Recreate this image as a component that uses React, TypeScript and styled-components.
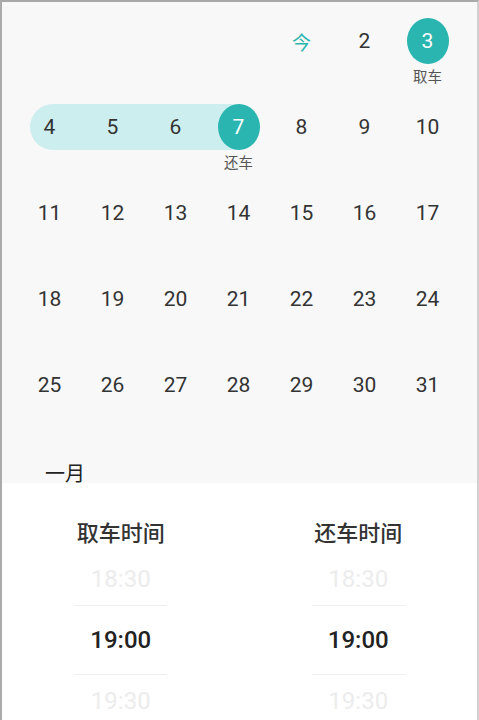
import React from "react";
import styled, { createGlobalStyle, css } from "styled-components";

const Global = createGlobalStyle`
  html, body { margin: 0; padding: 0; background: #ffffff; }
  body { font-family: Roboto, "Noto Sans", "Noto Sans CJK SC", sans-serif; }
  * { box-sizing: border-box; }
`;

const TEAL = "#2bb5b1";
const BAND = "#cdeeee";

const Frame = styled.div`
  width: 479px;
  height: 720px;
  border-top: 2px solid #a9a9a9;
  border-left: 2px solid #ababab;
  border-right: 2px solid #d0d0d0;
  display: flex;
  flex-direction: column;
  overflow: hidden;
`;

const CalendarArea = styled.div`
  height: 481px;
  flex: none;
  background: #f8f8f8;
  overflow: hidden;
  padding: 16px 0 0 16px;
`;

const Grid = styled.div`
  display: grid;
  grid-template-columns: repeat(7, 63px);
  grid-auto-rows: 86px;
`;

const Cell = styled.div`
  display: flex;
  flex-direction: column;
  align-items: center;
`;

type BandKind = "none" | "start" | "mid" | "end";

const Track = styled.div<{ $band: BandKind }>`
  position: relative;
  width: 100%;
  height: 46px;
  display: flex;
  justify-content: center;
  ${({ $band }) =>
    $band !== "none" &&
    css`
      &::before {
        content: "";
        position: absolute;
        top: 0;
        bottom: 0;
        background: ${BAND};
        left: ${$band === "start" ? "11.5px" : "0"};
        right: ${$band === "end" ? "50%" : "0"};
        border-radius: ${$band === "start" ? "23px 0 0 23px" : "0"};
      }
    `}
`;

const Day = styled.div<{ $selected?: boolean; $today?: boolean }>`
  position: relative;
  width: 42px;
  height: 46px;
  border-radius: 50%;
  display: flex;
  align-items: center;
  justify-content: center;
  font-family: Roboto, "Noto Sans CJK SC", sans-serif;
  font-size: 21px;
  color: #333333;
  ${({ $today }) =>
    $today &&
    css`
      color: ${TEAL};
      font-family: "Noto Sans CJK SC", sans-serif;
      font-size: 19px;
    `}
  ${({ $selected }) =>
    $selected &&
    css`
      background: ${TEAL};
      color: #ffffff;
    `}
`;

const DayLabel = styled.div`
  margin-top: 2px;
  font-family: "Noto Sans CJK SC", sans-serif;
  font-size: 14.5px;
  line-height: 20px;
  color: #555555;
`;

const MonthHeader = styled.div`
  margin-top: 15px;
  padding-left: 27px;
  font-family: "Noto Sans CJK SC", sans-serif;
  font-size: 20px;
  line-height: 20px;
  color: #222222;
`;

const Sheet = styled.div`
  flex: 1;
  background: #ffffff;
  display: grid;
  grid-template-columns: 1fr 1fr;
`;

const PickerColumn = styled.div`
  display: flex;
  flex-direction: column;
  align-items: center;
  padding-top: 33px;
`;

const PickerTitle = styled.div`
  font-family: "Noto Sans CJK SC", sans-serif;
  font-size: 22px;
  font-weight: 500;
  line-height: 30px;
  color: #333333;
  margin-bottom: 7px;
`;

const TimeItem = styled.div<{ $active?: boolean }>`
  width: 93px;
  display: flex;
  align-items: center;
  justify-content: center;
  font-family: Roboto, "Noto Sans", sans-serif;
  font-size: 24px;
  height: 52px;
  color: #ececec;
  ${({ $active }) =>
    $active &&
    css`
      height: 70px;
      color: #222222;
      font-weight: 500;
      border-top: 1px solid #efefef;
      border-bottom: 1px solid #efefef;
    `}
`;

type DayData = {
  label: string;
  selected?: boolean;
  today?: boolean;
  band?: BandKind;
  note?: string;
};

const rows: (DayData | null)[][] = [
  [null, null, null, null, { label: "今", today: true }, { label: "2" }, { label: "3", selected: true, note: "取车" }],
  [
    { label: "4", band: "start" },
    { label: "5", band: "mid" },
    { label: "6", band: "mid" },
    { label: "7", band: "end", selected: true, note: "还车" },
    { label: "8" },
    { label: "9" },
    { label: "10" },
  ],
  ["11", "12", "13", "14", "15", "16", "17"].map((l) => ({ label: l })),
  ["18", "19", "20", "21", "22", "23", "24"].map((l) => ({ label: l })),
  ["25", "26", "27", "28", "29", "30", "31"].map((l) => ({ label: l })),
];

const pickers = ["取车时间", "还车时间"];

export default function App() {
  return (
    <>
      <Global />
      <Frame>
        <CalendarArea>
          <Grid>
            {rows.flat().map((d, i) => (
              <Cell key={i}>
                {d && (
                  <>
                    <Track $band={d.band ?? "none"}>
                      <Day $selected={d.selected} $today={d.today}>
                        {d.label}
                      </Day>
                    </Track>
                    {d.note && <DayLabel>{d.note}</DayLabel>}
                  </>
                )}
              </Cell>
            ))}
          </Grid>
          <MonthHeader>一月</MonthHeader>
        </CalendarArea>
        <Sheet>
          {pickers.map((p) => (
            <PickerColumn key={p}>
              <PickerTitle>{p}</PickerTitle>
              <TimeItem>18:30</TimeItem>
              <TimeItem $active>19:00</TimeItem>
              <TimeItem>19:30</TimeItem>
            </PickerColumn>
          ))}
        </Sheet>
      </Frame>
    </>
  );
}
